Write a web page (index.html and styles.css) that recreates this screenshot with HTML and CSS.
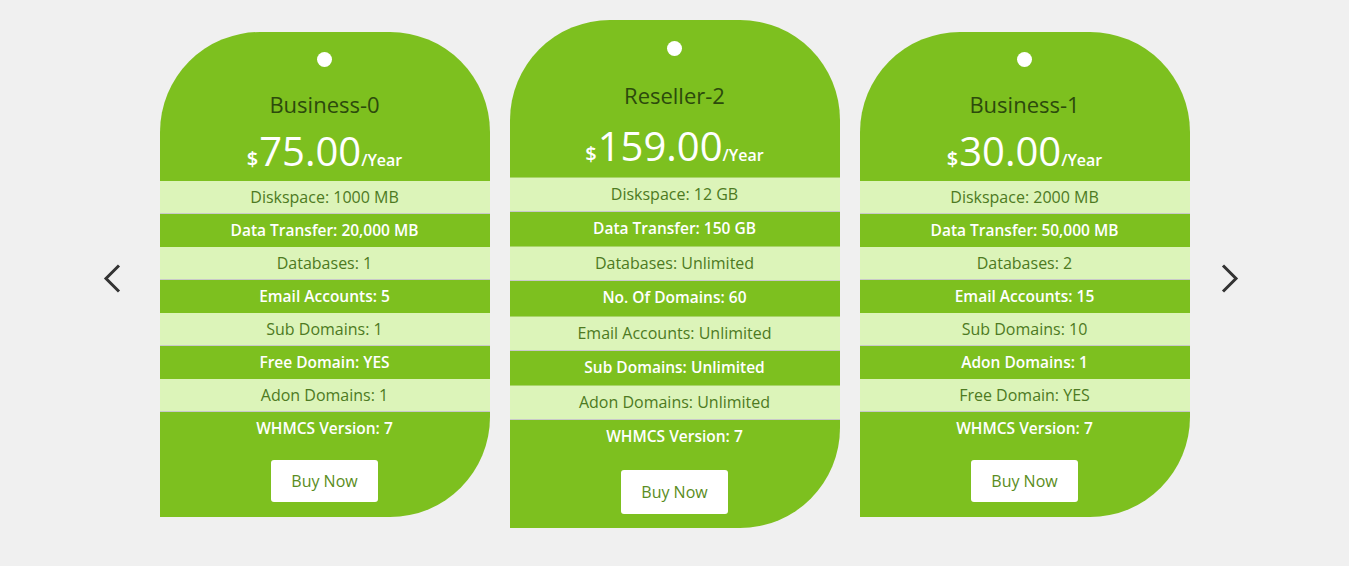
FILE: index.html
```html
<!DOCTYPE html>
<html>
<head>
<meta charset="utf-8">
<link rel="stylesheet" href="styles.css">
</head>
<body>
<div class="carousel">
  <div class="arrow arrow-left">
    <svg width="60" height="40" viewBox="0 0 60 40"><polyline points="19,11.5 6,24.5 19,37.5" fill="none" stroke="#333" stroke-width="3"/></svg>
  </div>
  <div class="cards">
    <div class="card">
      <div class="head">
        <div class="dot"></div>
        <div class="title">Business-0</div>
        <div class="price"><span class="cur">$</span>75.00<span class="per">/Year</span></div>
      </div>
      <div class="row light">Diskspace: 1000 MB</div>
      <div class="row dark">Data Transfer: 20,000 MB</div>
      <div class="row light">Databases: 1</div>
      <div class="row dark">Email Accounts: 5</div>
      <div class="row light">Sub Domains: 1</div>
      <div class="row dark">Free Domain: YES</div>
      <div class="row light">Adon Domains: 1</div>
      <div class="row dark">WHMCS Version: 7</div>
      <div class="foot"><span class="btn">Buy Now</span></div>
    </div>
    <div class="card featured">
      <div class="head">
        <div class="dot"></div>
        <div class="title">Reseller-2</div>
        <div class="price"><span class="cur">$</span>159.00<span class="per">/Year</span></div>
      </div>
      <div class="row light">Diskspace: 12 GB</div>
      <div class="row dark">Data Transfer: 150 GB</div>
      <div class="row light">Databases: Unlimited</div>
      <div class="row dark">No. Of Domains: 60</div>
      <div class="row light">Email Accounts: Unlimited</div>
      <div class="row dark">Sub Domains: Unlimited</div>
      <div class="row light">Adon Domains: Unlimited</div>
      <div class="row dark">WHMCS Version: 7</div>
      <div class="foot"><span class="btn">Buy Now</span></div>
    </div>
    <div class="card">
      <div class="head">
        <div class="dot"></div>
        <div class="title">Business-1</div>
        <div class="price"><span class="cur">$</span>30.00<span class="per">/Year</span></div>
      </div>
      <div class="row light">Diskspace: 2000 MB</div>
      <div class="row dark">Data Transfer: 50,000 MB</div>
      <div class="row light">Databases: 2</div>
      <div class="row dark">Email Accounts: 15</div>
      <div class="row light">Sub Domains: 10</div>
      <div class="row dark">Adon Domains: 1</div>
      <div class="row light">Free Domain: YES</div>
      <div class="row dark">WHMCS Version: 7</div>
      <div class="foot"><span class="btn">Buy Now</span></div>
    </div>
  </div>
  <div class="arrow arrow-right">
    <svg width="60" height="40" viewBox="0 0 60 40"><polyline points="33,11.5 46,24.5 33,37.5" fill="none" stroke="#333" stroke-width="3"/></svg>
  </div>
</div>
</body>
</html>
```

FILE: styles.css
```css
html, body {
  margin: 0;
  padding: 0;
  background: #f0f0f0;
  font-family: "Open Sans", "Liberation Sans", sans-serif;
}
.carousel {
  display: flex;
  justify-content: center;
  align-items: flex-start;
  padding-top: 20px;
}
.arrow {
  width: 60px;
  height: 40px;
  align-self: center;
}
.arrow svg { display: block; }
.cards {
  display: flex;
  gap: 20px;
  align-items: flex-start;
}
.card {
  width: 330px;
  background: #7dc01f;
  border-radius: 100px 100px 100px 0;
  overflow: hidden;
  margin-top: 12px;
  text-align: center;
}
.head {
  padding: 20px 0 5px;
  display: flex;
  flex-direction: column;
  align-items: center;
}
.dot {
  width: 15px;
  height: 15px;
  border-radius: 50%;
  background: #fff;
}
.title {
  margin-top: 22px;
  font-size: 22px;
  line-height: 30px;
  color: #2c4a0c;
}
.price {
  margin-top: 7px;
  font-size: 40px;
  line-height: 50px;
  height: 50px;
  color: #fff;
}
.cur {
  font-size: 20px;
  line-height: 1;
  font-weight: 600;
  margin-right: 1px;
}
.per {
  font-size: 16px;
  line-height: 1;
  font-weight: 600;
}
.row {
  font-size: 16px;
  line-height: 32px;
  border-bottom: 1px solid transparent;
}
.row.light {
  background: #dcf4b9;
  color: #4d7a22;
  border-bottom-color: #c9c9c9;
}
.row.dark {
  color: #fff;
  font-weight: 600;
  font-size: 15.5px;
}
.foot {
  padding: 15px 0 15px;
}
.btn {
  display: inline-block;
  width: 107px;
  height: 42px;
  line-height: 42px;
  background: #fff;
  color: #5a8c22;
  font-size: 16px;
  border-radius: 3px;
}
.featured {
  margin-top: 0;
}
.featured .head {
  padding: 21px 0 6px;
}
.featured .title {
  margin-top: 24px;
  font-size: 22px;
  line-height: 31px;
}
.featured .price {
  margin-top: 9px;
  font-size: 40px;
  line-height: 51px;
  height: 51px;
}
.featured .row {
  line-height: 33.7px;
}
.featured .row.light {
  line-height: 32.7px;
  border-top: 1px solid #a9d56a;
}
.featured .foot {
  padding: 15px 0 14px;
}
.featured .btn {
  height: 44px;
  line-height: 44px;
}
```
